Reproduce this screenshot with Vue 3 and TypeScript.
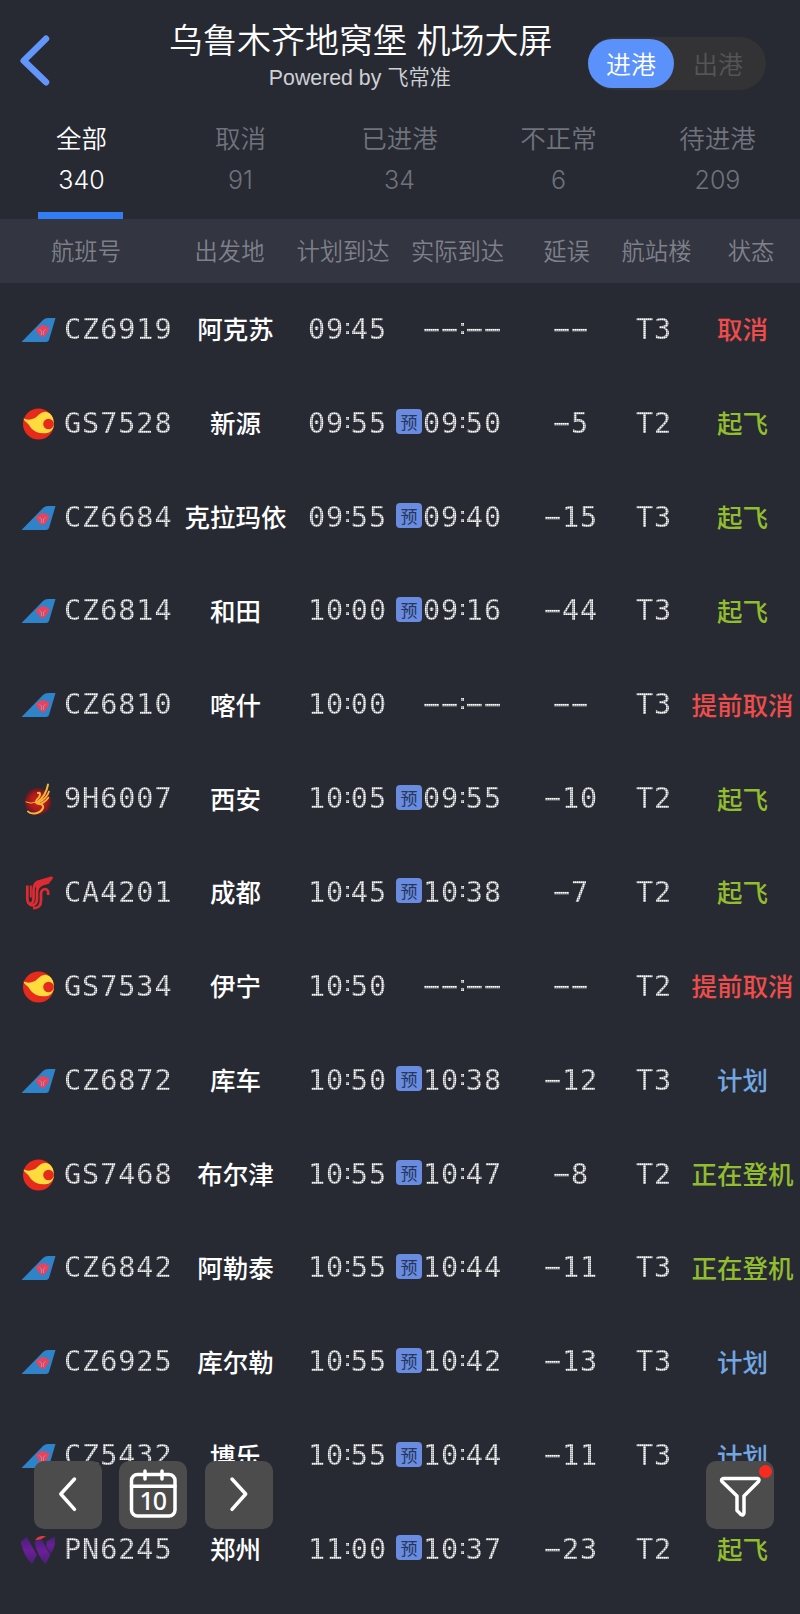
<script setup lang="ts">
interface Tab { label: string; count: number }
interface Flight {
  carrier: 'cz' | 'gs' | '9h' | 'ca' | 'pn'
  no: string
  from: string
  plan: string
  actual: string
  delay: string
  terminal: string
  status: string
  tone: 'red' | 'green' | 'blue'
}

const tabs: Tab[] = [
  { label: '全部', count: 340 },
  { label: '取消', count: 91 },
  { label: '已进港', count: 34 },
  { label: '不正常', count: 6 },
  { label: '待进港', count: 209 },
]

const columns: string[] = ['航班号', '出发地', '计划到达', '实际到达', '延误', '航站楼', '状态']

const row = (
  carrier: Flight['carrier'], no: string, from: string, plan: string, actual: string,
  delay: string, terminal: string, status: string, tone: Flight['tone'],
): Flight => ({ carrier, no, from, plan, actual, delay, terminal, status, tone })

const flights: Flight[] = [
  row('cz', 'CZ6919', '阿克苏', '09:45', '', '−−', 'T3', '取消', 'red'),
  row('gs', 'GS7528', '新源', '09:55', '09:50', '−5', 'T2', '起飞', 'green'),
  row('cz', 'CZ6684', '克拉玛依', '09:55', '09:40', '−15', 'T3', '起飞', 'green'),
  row('cz', 'CZ6814', '和田', '10:00', '09:16', '−44', 'T3', '起飞', 'green'),
  row('cz', 'CZ6810', '喀什', '10:00', '', '−−', 'T3', '提前取消', 'red'),
  row('9h', '9H6007', '西安', '10:05', '09:55', '−10', 'T2', '起飞', 'green'),
  row('ca', 'CA4201', '成都', '10:45', '10:38', '−7', 'T2', '起飞', 'green'),
  row('gs', 'GS7534', '伊宁', '10:50', '', '−−', 'T2', '提前取消', 'red'),
  row('cz', 'CZ6872', '库车', '10:50', '10:38', '−12', 'T3', '计划', 'blue'),
  row('gs', 'GS7468', '布尔津', '10:55', '10:47', '−8', 'T2', '正在登机', 'green'),
  row('cz', 'CZ6842', '阿勒泰', '10:55', '10:44', '−11', 'T3', '正在登机', 'green'),
  row('cz', 'CZ6925', '库尔勒', '10:55', '10:42', '−13', 'T3', '计划', 'blue'),
  row('cz', 'CZ5432', '博乐', '10:55', '10:44', '−11', 'T3', '计划', 'blue'),
  row('pn', 'PN6245', '郑州', '11:00', '10:37', '−23', 'T2', '起飞', 'green'),
]

const split = (time: string): string[] => (time || '−−:−−').split(':')
</script>

<template>
  <div class="screen">
    <header class="head">
      <svg class="back" viewBox="0 0 36 56"><path d="M30 6.700 7.700 28.700 30 50.200" /></svg>
      <div class="titles">
        <h1>乌鲁木齐地窝堡 机场大屏</h1>
        <p>Powered by 飞常准</p>
      </div>
      <div class="switch"><span class="on">进港</span><span class="off">出港</span></div>
    </header>

    <nav class="tabs">
      <div v-for="(t, i) in tabs" :key="t.label" class="tab" :class="{ active: i === 0 }">
        <span class="label">{{ t.label }}</span>
        <span class="count">{{ t.count }}</span>
      </div>
    </nav>

    <div class="cols">
      <span v-for="c in columns" :key="c">{{ c }}</span>
    </div>

    <main>
      <div v-for="f in flights" :key="f.no" class="row">
        <div class="logo">
          <svg v-if="f.carrier === 'cz'" viewBox="0 0 36 36">
            <path d="M1.500 30 23 8Q25 6 28 6H35.500L29 28Q28.300 30 26 30Z" fill="#2f83c9" />
            <path d="M16 16.500q2-2 4-1.500l0-2 2 1 1-1.500 1.500 1.500 2-1v2q3-.5 3.500 1.500l-2 2 .5 2-2.500 1-.5 2.500-3 1-3-1-.5-2.500-2-1z" fill="#e9435c" />
            <path d="M19.500 17.500l2 1.500v4m4-5.500-2 1.500v4" stroke="#a79ac4" stroke-width=".8" fill="none" />
          </svg>
          <svg v-else-if="f.carrier === 'gs'" viewBox="0 0 36 36">
            <circle cx="18.500" cy="18" r="15.500" fill="#e62a1c" />
            <path d="M3.500 12.500Q8 14.500 12 13Q16 12 18.500 9Q21 6 25 5.800Q30 6 32.800 11.500Q33.500 13 33.700 16L33.700 20.500Q32 27 25.500 27.200Q16 28 11 22Q8.500 17.500 6 16Q4 14.500 3.500 12.500Z" fill="#ffdb3d" />
            <circle cx="28.500" cy="18" r="5.300" fill="#e62a1c" />
          </svg>
          <svg v-else-if="f.carrier === '9h'" viewBox="0 0 36 36">
            <defs><radialGradient id="ember"><stop offset="0" stop-color="#d3241a" /><stop offset=".65" stop-color="#a81a19" /><stop offset="1" stop-color="#541b25" /></radialGradient></defs>
            <circle cx="18" cy="20.500" r="13.500" fill="url(#ember)" />
            <g fill="none" stroke="#f7b53b" stroke-linecap="round">
              <path d="M18 12q2-1 2 1.500t-3 5q-3 4 2 4.500t4 4q-2 4.500-8 5.500-5 .5-7-2" stroke-width="2" />
              <path d="M17.500 21Q26 15 28 3.500" stroke-width="2" />
              <path d="M19 21.500Q27 17 29 10.500" stroke-width="1.800" />
              <path d="M20.500 23Q26 20.500 28.500 16.500" stroke-width="1.500" />
              <path d="M6 21q5 2.500 10 0" stroke-width="1" />
            </g>
          </svg>
          <svg v-else-if="f.carrier === 'ca'" viewBox="0 0 36 36">
            <g fill="none" stroke="#dc2c31" stroke-width="2.700">
              <path d="M7.300 10.500v13q0 5 3 5t3.200-5V15.500Q13.500 7 20 6 28 4 32 2.500" />
              <path d="M10.800 10.500v12" stroke-width="2" />
              <path d="M8 27.500q3 4 6 2.500 3-2 3-6V17q0-8 12-9.500" />
              <path d="M13 33q8 .5 8-7.500v-6q0-5.500 4.500-5.500 3.500 1 2.500 6" />
            </g>
            <path d="M15 11q3-7 18.500-9-3 7-10 8l-7 4z" fill="#dc2c31" />
          </svg>
          <svg v-else viewBox="0 0 36 36">
            <defs><linearGradient id="violet" x1="0" y1="0" x2="0" y2="1"><stop offset="0" stop-color="#45207a" /><stop offset=".5" stop-color="#6b1f96" /><stop offset="1" stop-color="#4a2078" /></linearGradient></defs>
            <path d="M.7 10 6.700 4.700 16.900 23 12 32Q4 25 .7 10Z" fill="url(#violet)" />
            <path d="M14.500 10 21 6 30.200 23 25.700 32Q17 24 14.500 10Z" fill="url(#violet)" />
            <path d="M26.500 9.500 34.500 4.700Q36.500 14 30.500 22L26.500 14.500Z" fill="url(#violet)" />
            <path d="M15 8.500Q18 3 26 4.300L21.500 7Z" fill="#e53b38" />
          </svg>
        </div>
        <div class="led no">{{ f.no }}</div>
        <div class="from">{{ f.from }}</div>
        <div class="led plan">{{ split(f.plan)[0] }}<i>:</i>{{ split(f.plan)[1] }}</div>
        <div class="mark"><b v-if="f.actual">预</b></div>
        <div class="led actual">{{ split(f.actual)[0] }}<i>:</i>{{ split(f.actual)[1] }}</div>
        <div class="led delay">{{ f.delay }}</div>
        <div class="led term">{{ f.terminal }}</div>
        <div class="status" :class="f.tone"><span>{{ f.status }}</span></div>
      </div>
    </main>

    <footer class="tools">
      <button><svg viewBox="0 0 68 68"><path d="M40.500 18 26.800 33 40.500 48.300" /></svg></button>
      <button class="calendar">
        <svg viewBox="0 0 68 68"><rect x="12.500" y="13.500" width="43.500" height="41.500" rx="6" /><path d="M12.500 25.200H56M26 10V18M43 10V18" /></svg>
        <span>10</span>
      </button>
      <button><svg viewBox="0 0 68 68"><path d="M27 18 40.700 33 27 48.300" /></svg></button>
      <button class="filter">
        <svg viewBox="0 0 68 68"><path d="M17.500 17.500H51.500Q54 18 52.500 20.500L38 35V52Q37.500 55 35 53.500L31 49.500V35L16 20.500Q14.500 18 17.500 17.500Z" /></svg>
        <i class="dot"></i>
      </button>
    </footer>
  </div>
</template>

<style>
body { background: #272a33; }
</style>

<style scoped>
.screen {
  position: relative;
  width: 800px;
  height: 1614px;
  overflow: hidden;
  background: #272a33;
  color: #fff;
  font-family: "Liberation Sans", "Noto Sans CJK SC", sans-serif;
}
.head { display: grid; grid-template-columns: 169px 382px 1fr; height: 116px; }
.back { width: 36px; height: 56px; margin: 32px 0 0 16px; fill: none; stroke: #6396fb; stroke-width: 6.500; stroke-linecap: round; stroke-linejoin: round; }
.titles { text-align: center; white-space: nowrap; }
h1 { margin: 16px 0 0; font-size: 34px; line-height: 50px; font-weight: 350; }
.titles p { margin: 0; font-size: 21.300px; line-height: 25px; font-weight: 350; color: #cfd0d4; }
.switch { display: flex; align-items: center; width: 178px; height: 53px; margin: 37px 0 0 37px; border-radius: 27px; background: #333335; font-size: 25px; font-weight: 350; }
.switch span { display: flex; box-sizing: border-box; align-items: center; justify-content: center; height: 49px; padding-bottom: 2px; border-radius: 25px; }
.switch .on { width: 86px; background: #5b91fa; }
.switch .off { width: 88px; color: #555558; }
.tabs { display: grid; grid-template-columns: repeat(5, 159px); padding-left: 2px; height: 103px; }
.tab { position: relative; display: flex; flex-direction: column; align-items: center; color: #70737b; font-size: 25.500px; }
.tab .label { margin-top: 4px; line-height: 38px; font-weight: 350; }
.tab .count { margin-top: 3px; line-height: 38px; font-size: 25px; font-family: Inter, sans-serif; font-weight: 300; }
.tab.active { color: #fff; }
.tab.active::after { content: ""; position: absolute; bottom: 0; left: 36px; width: 85px; height: 7px; background: #307df6; }
.cols { display: grid; grid-template-columns: 172px 115px 112px 117px 101px 79px 110px; height: 64px; align-items: center; background: #333541; color: #7f818a; font-size: 23.300px; font-weight: 350; text-align: center; white-space: nowrap; }
.cols span { padding-bottom: 2px; }
.row { display: grid; grid-template-columns: 64px 118px 107px 107px 27px 83px 130px 48px 117px; height: 93.850px; align-items: center; white-space: nowrap; }
.logo { padding-left: 20px; height: 36px; }
.logo svg { display: block; width: 36px; height: 36px; }
/* Text is filled with a fine grid so the strokes break up into lamp dots. */
.led {
  justify-self: start;
  font-family: "DejaVu Sans Mono", monospace;
  font-size: 28.500px;
  line-height: 34px;
  letter-spacing: .92px;
  color: transparent;
  background-color: #fff;
  background-image:
    linear-gradient(90deg, transparent 1px, rgba(39, 42, 51, .28) 1px),
    linear-gradient(transparent 1px, rgba(39, 42, 51, .28) 1px);
  background-size: 2px 2px;
  background-clip: text;
  -webkit-background-clip: text;
}
.led i { font: bold 20px/20px "Liberation Sans", sans-serif; letter-spacing: 0; vertical-align: 5px; }
.plan { margin-left: 19px; }
.delay { justify-self: center; }
.from, .status { padding-bottom: 4px; font-size: 25.500px; font-weight: 500; text-align: center; }
.mark b { display: flex; align-items: center; justify-content: center; width: 26px; height: 25px; margin-bottom: 4px; border-radius: 4px; background: #698ce0; color: #263559; font-size: 17px; font-weight: 400; }
.status { display: flex; justify-content: center; }
.red { color: #f04c4a; }
.green { color: #91bd2e; }
.blue { color: #72a7e2; }
.tools { position: absolute; left: 34px; top: 1461px; width: 740px; display: flex; gap: 17.300px; }
button { position: relative; width: 68px; height: 68px; padding: 0; border: 0; border-radius: 10px; background: #4c4c4d; color: #fff; }
button svg { display: block; width: 68px; height: 68px; fill: none; stroke: #fff; stroke-width: 3.500; stroke-linecap: round; stroke-linejoin: round; }
.calendar span { position: absolute; inset: 25px 1px auto 0; text-align: center; font: 500 25px/28px "Noto Sans", sans-serif; letter-spacing: -1px; }
.filter { margin-left: auto; }
.dot { position: absolute; right: 2px; top: 4px; width: 13px; height: 13px; border-radius: 50%; background: #f92b20; }
</style>
